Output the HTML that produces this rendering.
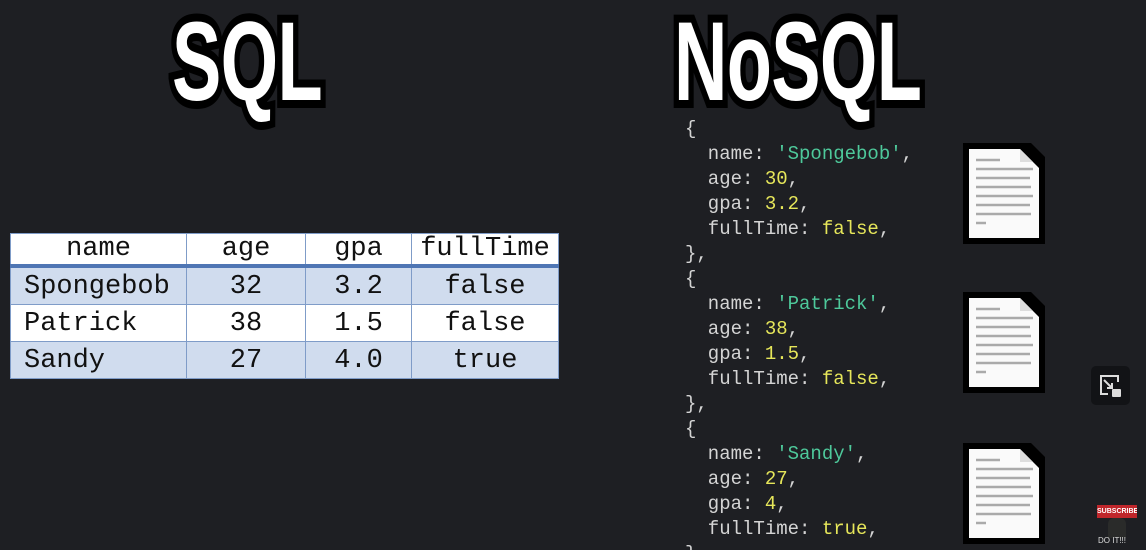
<!DOCTYPE html>
<html><head><meta charset="utf-8"><style>
html{overflow:hidden;height:550px}
body{margin:0;width:1146px;height:550px;background:#1e1f23;overflow:hidden;position:relative;font-family:"Liberation Mono",monospace}
.t{position:absolute;font-family:"Liberation Sans",sans-serif;font-weight:bold;color:#fff;font-size:112px;line-height:1;transform-origin:0 0;letter-spacing:-1px}
.t span{-webkit-text-stroke:16px #000;paint-order:stroke fill}
table{position:absolute;left:10px;top:233px;border-collapse:collapse;font-family:"Liberation Mono",monospace;font-size:27px;color:#111}
td{border:1px solid #7f9cc8;padding:2px 0 0;height:34px;text-align:center}
tr.h td{background:#fff;border-bottom:4px solid #4f76b4;height:30px;padding:0}
tr.b td{background:#d0dcee}
tr.w td{background:#fff}
td.l{text-align:left;padding-left:13px}
.code{position:absolute;left:685px;top:117px;font-size:19px;line-height:25px;color:#d4d4d4;white-space:pre}
.s{color:#4ec99b}.n{color:#e6e65a}
.doc{position:absolute;left:963px}
</style></head><body>
<div class="t" style="left:172px;top:6px;transform:scaleX(0.66)"><span>SQL</span></div>
<div class="t" style="left:674px;top:6px;transform:scaleX(0.66)"><span>NoSQL</span></div>
<table>
<tr class="h"><td style="width:175px">name</td><td style="width:118px">age</td><td style="width:105px">gpa</td><td style="width:146px">fullTime</td></tr>
<tr class="b"><td class="l">Spongebob</td><td>32</td><td>3.2</td><td>false</td></tr>
<tr class="w"><td class="l">Patrick</td><td>38</td><td>1.5</td><td>false</td></tr>
<tr class="b"><td class="l">Sandy</td><td>27</td><td>4.0</td><td>true</td></tr>
</table>
<div class="code">{
  name: <span class="s">'Spongebob'</span>,
  age: <span class="n">30</span>,
  gpa: <span class="n">3.2</span>,
  fullTime: <span class="n">false</span>,
},
{
  name: <span class="s">'Patrick'</span>,
  age: <span class="n">38</span>,
  gpa: <span class="n">1.5</span>,
  fullTime: <span class="n">false</span>,
},
{
  name: <span class="s">'Sandy'</span>,
  age: <span class="n">27</span>,
  gpa: <span class="n">4</span>,
  fullTime: <span class="n">true</span>,
}</div>
<svg width="0" height="0" style="position:absolute"><defs><g id="d">
<path d="M0 0H68L82 14V101H0Z" fill="#000"/>
<path d="M6 6H57L76 25V95H6Z" fill="#fafafa"/>
<path d="M57 6V19H70Z" fill="#ddd"/>
<g stroke="#aaa" stroke-width="2.5"><path d="M13 17H37M13 26H70M13 35H67M13 44H68M13 53H70M13 62H67M13 71H68M13 80H23"/></g>
</g></defs></svg>
<svg class="doc" style="top:143px" width="82" height="101"><use href="#d"/></svg>
<svg class="doc" style="top:292px" width="82" height="101"><use href="#d"/></svg>
<svg class="doc" style="top:443px" width="82" height="101"><use href="#d"/></svg>
<div style="position:absolute;left:1091px;top:366px;width:39px;height:39px;background:#121316;border-radius:5px"></div>
<svg style="position:absolute;left:1098px;top:374px" width="26" height="24"><path d="M10 2H3V20H10M3 2H20V8" fill="none" stroke="#ddd" stroke-width="2"/><path d="M6 6L14 14M14 9V14H9" fill="none" stroke="#ddd" stroke-width="2"/><rect x="14" y="15" width="9" height="8" rx="1" fill="#ddd"/></svg>
<div style="position:absolute;left:1097px;top:505px;width:40px;height:13px;background:#c0262b;color:#fff;font:bold 7px 'Liberation Sans',sans-serif;text-align:center;line-height:13px;overflow:hidden">SUBSCRIBE</div>
<div style="position:absolute;left:1108px;top:518px;width:18px;height:20px;background:#2a2b2a;border-radius:6px 6px 0 0"></div>
<div style="position:absolute;left:1098px;top:536px;color:#ddd;font:8px 'Liberation Sans',sans-serif">DO IT!!!</div>
</body></html>
